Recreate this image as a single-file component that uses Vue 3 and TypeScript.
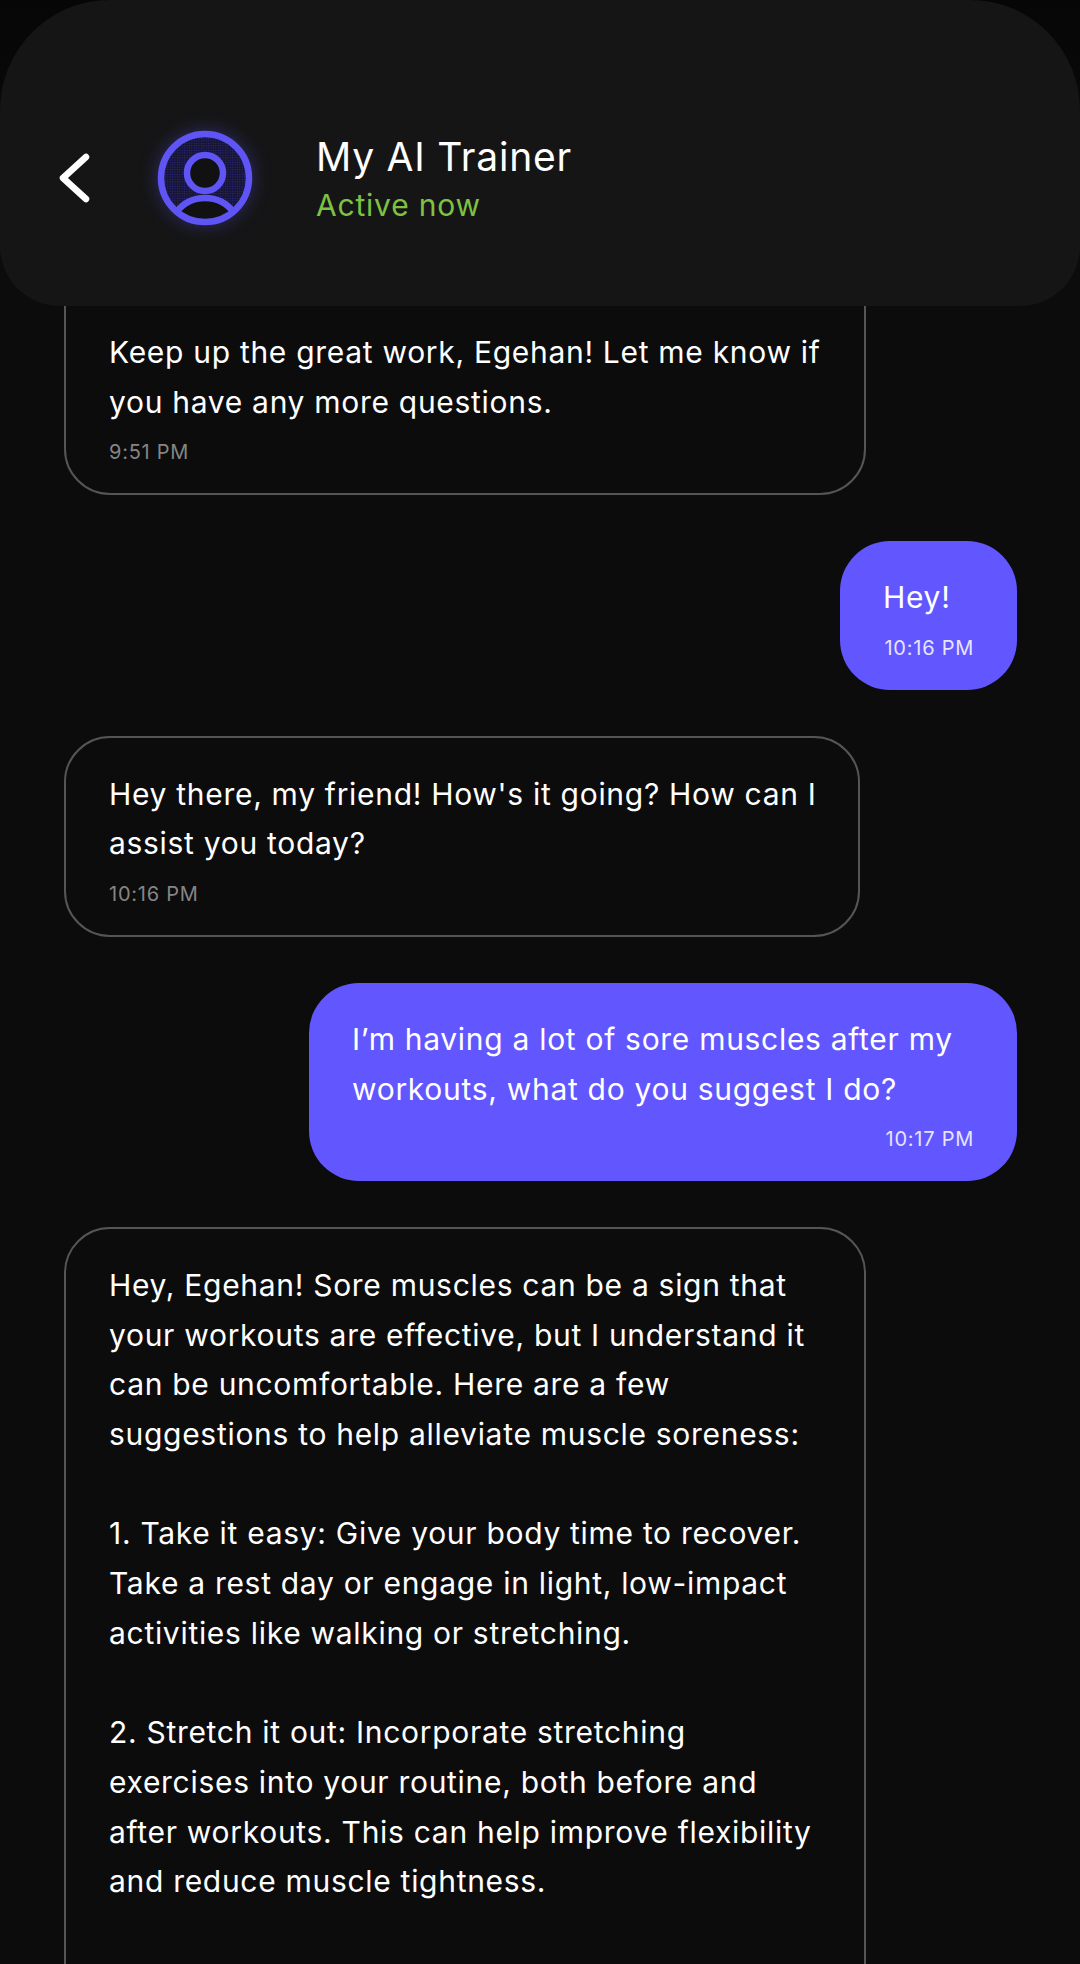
<script setup lang="ts">
interface Message {
  from: 'ai' | 'me';
  lines: string[];
  time?: string;
  width: number;
}

const messages: Message[] = [
  {
    from: 'ai',
    lines: ['Keep up the great work, Egehan! Let me know if', 'you have any more questions.'],
    time: '9:51 PM',
    width: 802
  },
  { from: 'me', lines: ['Hey!'], time: '10:16 PM', width: 177 },
  {
    from: 'ai',
    lines: ["Hey there, my friend! How's it going? How can I", 'assist you today?'],
    time: '10:16 PM',
    width: 796
  },
  {
    from: 'me',
    lines: ['I’m having a lot of sore muscles after my', 'workouts, what do you suggest I do?'],
    time: '10:17 PM',
    width: 708
  },
  {
    from: 'ai',
    lines: [
      'Hey, Egehan! Sore muscles can be a sign that',
      'your workouts are effective, but I understand it',
      'can be uncomfortable. Here are a few',
      'suggestions to help alleviate muscle soreness:',
      '',
      '1. Take it easy: Give your body time to recover.',
      'Take a rest day or engage in light, low-impact',
      'activities like walking or stretching.',
      '',
      '2. Stretch it out: Incorporate stretching',
      'exercises into your routine, both before and',
      'after workouts. This can help improve flexibility',
      'and reduce muscle tightness.'
    ],
    width: 802
  }
];
</script>

<template>
  <div class="screen">
    <header class="topbar">
      <svg class="back" viewBox="0 0 36 52" fill="none">
        <path d="M30 5 L7 26 L30 47" stroke="#fff" stroke-width="6.5" stroke-linecap="round" stroke-linejoin="round" />
      </svg>
      <svg class="avatar" viewBox="0 0 120 120" fill="none">
        <defs>
          <pattern id="dots" width="2.4" height="2.4" patternUnits="userSpaceOnUse">
            <rect width="2.4" height="2.4" fill="#151330" />
            <circle cx="1.2" cy="1.2" r="0.7" fill="#2c2880" />
          </pattern>
        </defs>
        <circle cx="60" cy="60" r="44" fill="url(#dots)" />
        <path d="M31.5 94 A36 36 0 0 1 88.5 94 A44 44 0 0 1 31.5 94 Z" fill="#111112" />
        <circle cx="60" cy="55" r="18" fill="#111112" stroke="#5f55f5" stroke-width="6.5" />
        <path d="M31.5 94 A36 36 0 0 1 88.5 94" stroke="#5f55f5" stroke-width="6.5" />
        <circle cx="60" cy="60" r="44" stroke="#5f55f5" stroke-width="6.5" />
      </svg>
      <div class="who">
        <div class="name">My AI Trainer</div>
        <div class="status">Active now</div>
      </div>
    </header>

    <main class="thread">
      <div
        v-for="(m, i) in messages"
        :key="i"
        class="bubble"
        :class="m.from"
        :style="{ width: m.width + 'px' }"
      >
        <div v-for="(line, j) in m.lines" :key="j" class="line">{{ line || '\u00a0' }}</div>
        <div v-if="m.time" class="time">{{ m.time }}</div>
      </div>
    </main>
  </div>
</template>

<style>
html,
body {
  background: #0c0c0d;
}
</style>

<style scoped>
.screen {
  position: relative;
  width: 1080px;
  height: 1964px;
  overflow: hidden;
  background: linear-gradient(#060606, #0c0c0d 200px);
  font-family: Inter, 'Open Sans', sans-serif;
  color: #fff;
}

.topbar {
  position: absolute;
  top: 0;
  left: 0;
  right: 0;
  z-index: 2;
  height: 306px;
  box-sizing: border-box;
  padding: 50px 0 0 56px;
  display: flex;
  align-items: center;
  background: #151516;
  border-radius: 110px 110px 60px 60px;
}

.back {
  width: 36px;
  height: 52px;
  flex: none;
}

.avatar {
  width: 120px;
  height: 120px;
  flex: none;
  margin-left: 53px;
  filter: drop-shadow(0 0 9px rgba(95, 85, 245, 0.35));
}

.who {
  margin-left: 51px;
  padding-top: 4px;
}

.name {
  font-size: 39px;
  line-height: 50px;
  letter-spacing: 0.75px;
}

.status {
  font-size: 30px;
  line-height: 46px;
  letter-spacing: 0.8px;
  color: #7dc242;
}

.thread {
  display: flex;
  flex-direction: column;
  gap: 46px;
  padding: 200px 63px 0 64px;
}

.bubble {
  box-sizing: border-box;
  flex: none;
}

.ai {
  align-self: flex-start;
  border: 2px solid #555556;
  border-radius: 46px;
  padding: 32px 20px 29px 43px;
}

/* top of the first bubble and end of the last one are out of view */
.ai:first-child {
  padding-top: 126px;
}

.ai:last-child {
  padding-bottom: 140px;
}

.me {
  align-self: flex-end;
  background: #6257fe;
  border-radius: 50px;
  padding: 32px 20px 29.5px 43px;
}

.line {
  font-size: 30px;
  line-height: 49.7px;
  letter-spacing: 0.7px;
  white-space: nowrap;
}

.time {
  font-size: 20px;
  line-height: 24px;
  margin-top: 13px;
  color: #858585;
  letter-spacing: 0.75px;
}

.me .time {
  color: #e6e4ff;
  text-align: right;
  padding-right: 23px;
}
</style>
